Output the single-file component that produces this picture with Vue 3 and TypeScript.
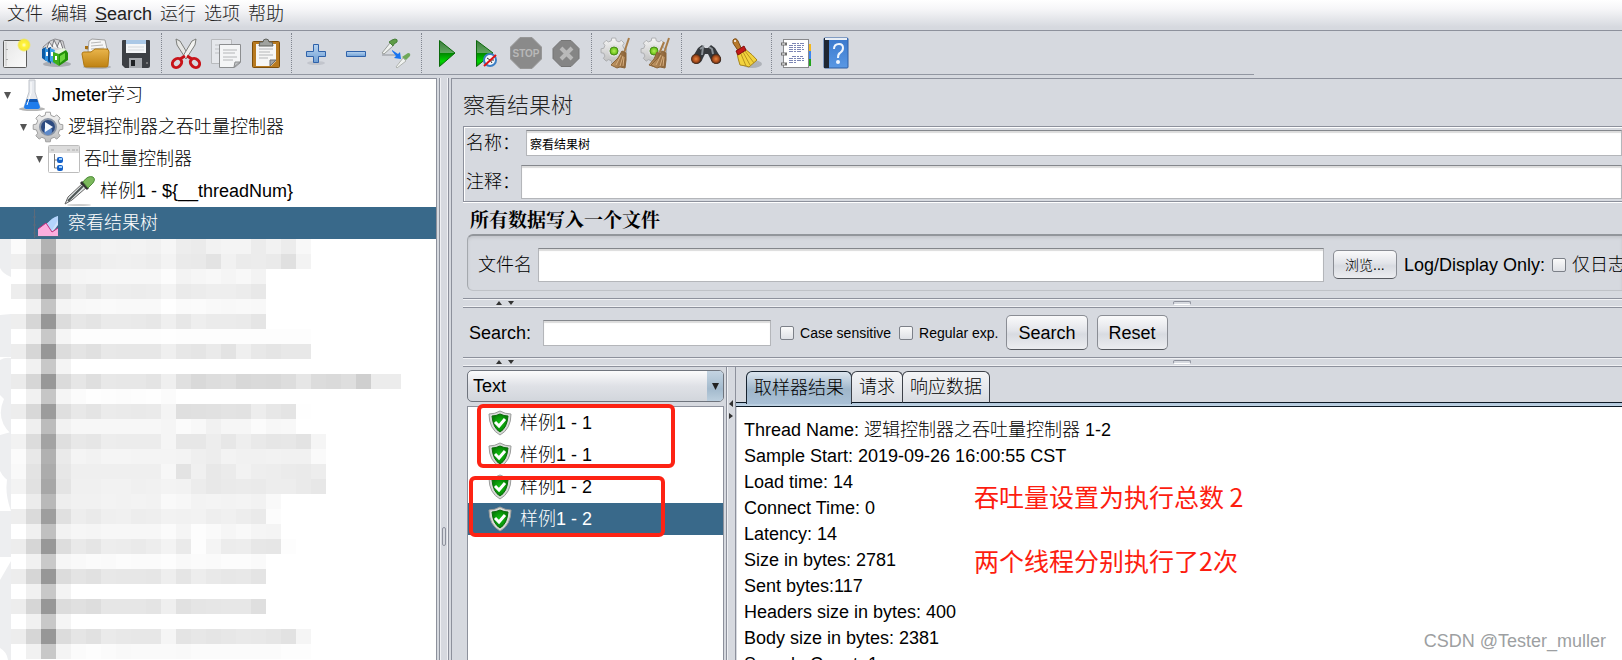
<script setup lang="ts">
import { ref } from 'vue'

const menus = ['文件', '编辑', 'Search', '运行', '选项', '帮助']

const toolGroups: { id: string; label: string }[][] = [
  [
    { id: 'new', label: '新建' },
    { id: 'templates', label: '模板' },
    { id: 'open', label: '打开' },
    { id: 'save', label: '保存' },
  ],
  [
    { id: 'cut', label: '剪切' },
    { id: 'copy', label: '复制' },
    { id: 'paste', label: '粘贴' },
  ],
  [
    { id: 'expand', label: '全部展开' },
    { id: 'collapse', label: '全部折叠' },
    { id: 'toggle', label: '切换' },
  ],
  [
    { id: 'start', label: '启动' },
    { id: 'startnow', label: '不停顿开始' },
    { id: 'stop', label: '停止' },
    { id: 'shutdown', label: '关闭' },
  ],
  [
    { id: 'clear', label: '清除' },
    { id: 'clearall', label: '清除全部' },
  ],
  [
    { id: 'find', label: '查找' },
    { id: 'resetfind', label: '重置搜索' },
  ],
  [
    { id: 'functions', label: '函数助手' },
    { id: 'help', label: '帮助' },
  ],
]

const tree = [
  { text: 'Jmeter学习', icon: 'plan', depth: 0, open: true },
  { text: '逻辑控制器之吞吐量控制器', icon: 'threads', depth: 1, open: true },
  { text: '吞吐量控制器', icon: 'controller', depth: 2, open: true },
  { text: '样例1 - ${__threadNum}', icon: 'sampler', depth: 3, open: false },
  { text: '察看结果树', icon: 'listener', depth: 1, open: false, selected: true },
]

const results = ['样例1 - 1', '样例1 - 1', '样例1 - 2', '样例1 - 2']
const selectedResult = ref(3)

const tabs = ['取样器结果', '请求', '响应数据']
const activeTab = ref(0)

const lines = [
  'Thread Name: 逻辑控制器之吞吐量控制器 1-2',
  'Sample Start: 2019-09-26 16:00:55 CST',
  'Load time: 14',
  'Connect Time: 0',
  'Latency: 14',
  'Size in bytes: 2781',
  'Sent bytes:117',
  'Headers size in bytes: 400',
  'Body size in bytes: 2381',
  'Sample Count: 1',
]

const name = ref('察看结果树')
const comment = ref('')
const filename = ref('')
const query = ref('')
const renderer = ref('Text')

// Outline of an eight-toothed gear centred in a 32px box
const gearPath = (() => {
  const shape: [number, number][] = [[-14, 12], [-9, 15], [9, 15], [14, 12]]
  const points: string[] = []
  for (let tooth = 0; tooth < 8; tooth++) {
    for (const [offset, radius] of shape) {
      const a = ((tooth * 45 + offset) * Math.PI) / 180
      points.push(`${(16 + radius * Math.cos(a)).toFixed(1)} ${(16 + radius * Math.sin(a)).toFixed(1)}`)
    }
  }
  return `M${points.join('L')}z`
})()

// Grey levels of the pixelated block, one string per row of cells
const mosaic = [
  'fb e5 b3 ea f0 f0 f3 f2 f3 f1 f6 ed eb f2 f4 f4 ec f2 ec f8',
  'ef dd a4 e1 ea ea ef f0 ef ed f3 ea e9 e3 f1 eb ec ea e0 f3',
  'ff ec bc f1 f5 f6 f7 f7 f7 f7 fc f3 f6 f8 f5 f8 f3',
  'ed d8 9a dd ec e6 ee ed ec ed f3 ea ec ee ee ec e8',
  'ff f1 c4 f4 f8 f9 fa f9 f9 f9 fe fa fb f9 f8 f9 f8',
  'ee d6 97 dc e7 e4 ea ea e9 e7 ef e7 ee eb eb ea e5',
  'ff f1 c8 f5 fd fd fd fd fd fd fe fd fd fd fd fd fd fd fd fd',
  'ed d6 97 dc e4 e0 e8 e7 e7 e7 ef e7 e5 ea e3 ef e8 e5 e8 e8',
  'ff f1 c8 f4',
  'eb d6 98 db e6 df e8 e7 e7 e4 ef e0 d9 dd df d8 da d9 dd e6 dc da de cf ec ec',
  'ff f1 c6 f5 fb fe fd fc fd fe fb',
  'ed d8 9c df e8 e4 eb ea e9 ea f4 df e0 e1 e3 e2 ed e7 e4 fe',
  'ff ef bc f2 f7 f7 f7 f7 f7 f7 f5 fb f8 f1 f6 f6 fb f7 f8',
  'f2 dc a3 df e8 e6 ed ec ec ec f5 e7 e7 ed e7 ee e9 e6 e7 e3 f5',
  'fb e8 b1 ea f4 f2 f5 f5 f4 f4 f4 f3 ef ed f3 f1 f1 f2 f1 f1 fa',
  'f9 e3 ac e7 ef ef ef ef ef ef f7 e3 f0 e8 eb f2 ee ed eb ea ed',
  'f3 e1 a7 e4 f0 f0 f2 f2 f0 f1 f3 f2 ec e8 ea eb ea ed ed ea e7',
  'ff ec b9 ee f1 f1 f3 f2 f3 f2 f9 f7 f3 f4 f3 f4 f2 f9',
  'ee da 9e e0 ed ea ef f0 ed ee f2 f1 f2 ee f0 ed ea fc',
  'ff f0 c0 f2 f6 f5 f7 f7 f7 f7 fb f5 fd fa f6 f9 f5 f4',
  'ed d6 98 dd e9 e5 ed ec ea ed f3 ea fd f4 ec ed e7 e6 fd',
  'ff f1 c9 f6 f9 fb fa fc fb fb fd f9 fb fa fc fc fa',
  'ed d6 97 dc e4 e1 e8 e7 e7 e6 ee e5 ed e9 e7 e8 e4',
  'ff f1 c8 f4',
  'ed d6 97 dc e0 dd e6 e6 e6 e4 ef e1 e5 e6 e7 e7 df',
  'ff f1 c8 f5',
  'ed d6 97 dc e5 e1 ea e8 e7 e7 f5 e4 e7 e5 e7 e9 e8 e6 e2 f5',
  'ff f1 c8 f4 fb fd fb f9 fa fa fa f9 fb fb fb fb fb fb fd fd',
].map((row) => row.split(' ').map((v) => `#${v}${v}${v}`))
</script>

<template>
  <div class="app">
    <svg class="defs" width="0" height="0" aria-hidden="true">
      <defs>
        <linearGradient id="gPlay" x1="0" y1="0" x2="0" y2="1">
          <stop offset="0" stop-color="#3c7a3c" /><stop offset=".48" stop-color="#5fa85f" />
          <stop offset=".5" stop-color="#008a00" /><stop offset=".8" stop-color="#00d400" /><stop offset="1" stop-color="#009a00" />
        </linearGradient>
        <linearGradient id="gBlue" x1="0" y1="0" x2="0" y2="1">
          <stop offset="0" stop-color="#b9d4f0" /><stop offset="1" stop-color="#6f9fd4" />
        </linearGradient>
        <linearGradient id="gFolder" x1="0" y1="0" x2="0" y2="1">
          <stop offset="0" stop-color="#e9b54c" /><stop offset="1" stop-color="#bf8212" />
        </linearGradient>
        <linearGradient id="gPaper" x1="0" y1="0" x2="1" y2="1">
          <stop offset="0" stop-color="#e6e6e6" /><stop offset="1" stop-color="#fafafa" />
        </linearGradient>
        <linearGradient id="gBook" x1="0" y1="0" x2="0" y2="1">
          <stop offset="0" stop-color="#3a78cc" /><stop offset="1" stop-color="#5a98e4" />
        </linearGradient>
        <linearGradient id="gBroom" x1="0" y1="0" x2="1" y2="0">
          <stop offset="0" stop-color="#c39a68" /><stop offset=".5" stop-color="#a67c4c" /><stop offset="1" stop-color="#8a6238" />
        </linearGradient>
        <linearGradient id="gGear" x1="0" y1="0" x2="0" y2="1">
          <stop offset="0" stop-color="#f6f6f6" /><stop offset="1" stop-color="#bcbcbc" />
        </linearGradient>
        <radialGradient id="gStar">
          <stop offset="0" stop-color="#ffffd0" /><stop offset=".35" stop-color="#fff23a" /><stop offset=".75" stop-color="#f4e83a" /><stop offset="1" stop-color="#f4e83a" stop-opacity="0" />
        </radialGradient>
        <radialGradient id="gOrange">
          <stop offset="0" stop-color="#e8823c" /><stop offset=".6" stop-color="#a84c1c" /><stop offset="1" stop-color="#3a2418" />
        </radialGradient>
        <radialGradient id="gGreen">
          <stop offset="0" stop-color="#b4f05a" /><stop offset="1" stop-color="#5cb80c" />
        </radialGradient>
        <radialGradient id="gShield">
          <stop offset="0" stop-color="#12c412" /><stop offset="1" stop-color="#058005" />
        </radialGradient>
      </defs>
    </svg>

    <nav class="menubar" aria-label="主菜单">
      <button v-for="m in menus" :key="m" type="button">
        <template v-if="m === 'Search'"><u>S</u>earch</template>
        <template v-else>{{ m }}</template>
      </button>
    </nav>

    <div class="toolbar" role="toolbar" aria-label="工具栏">
      <div v-for="(g, gi) in toolGroups" :key="gi" class="group">
        <button v-for="t in g" :key="t.id" type="button" :aria-label="t.label" :disabled="t.id === 'stop' || t.id === 'shutdown'">
          <svg width="32" height="32" viewBox="0 0 32 32" aria-hidden="true">
            <g v-if="t.id === 'new'">
              <rect x="3.500" y="3.500" width="23" height="27" rx="1" fill="url(#gPaper)" stroke="#5c5c5c" />
              <path d="M6 5v24" stroke="#c8c8c8" /><path d="M7 12v1M7 22v1" stroke="#777" />
              <circle cx="24" cy="8" r="7" fill="url(#gStar)" />
            </g>
            <g v-else-if="t.id === 'templates'">
              <ellipse cx="17" cy="27" rx="14" ry="3" fill="#8a8e94" opacity=".6" />
              <path d="M3 10l7-6 5-2 8 2 2 8-5 9H6z" fill="#d4d4d6" stroke="#8c8c90" />
              <path d="M7 11l2-6 4 5M12 10l2-7 4 8M17 10l3-7 3 9" fill="#f6f6f6" stroke="#77777c" />
              <path d="M2 12l4-2v14l-4-3z" fill="#0c5aa4" /><path d="M5 11l4 2v13l-4-3z" fill="#2e92e0" />
              <path d="M8 11l3-1v17l-3-3z" fill="#0a4a8c" /><path d="M10 11l5 2v14l-5-3z" fill="#3fa0ea" />
              <path d="M14 14l10-3 3 3-8 4z" fill="#e8f4e0" /><path d="M13 15l6 2v12l-6-4z" fill="#3cae1a" />
              <path d="M19 17l7-4 2 3v7l-9 6z" fill="#23900a" /><path d="M20 19l5-3v6l-5 4z" fill="#6ad63c" />
              <path d="M7 15v4M12 15v4M16 19v4" stroke="#fff" stroke-width="2" />
            </g>
            <g v-else-if="t.id === 'open'">
              <ellipse cx="17" cy="30" rx="14" ry="2" fill="#8a8e94" opacity=".5" />
              <path d="M5 12V9h5l2 2h16v5z" fill="#a86f10" />
              <path d="M8 15l1-11 3-2 13 1 3 13z" fill="#f6f6f6" stroke="#a0a0a0" /><path d="M11 6l10-1M11 9l12-1M11 12l13-1" stroke="#b8b8b8" />
              <path d="M2 17q0-2 2-2h7l4-3h11q3 0 3 3l-1 13q0 2-2 2H6q-2 0-2-2z" fill="url(#gFolder)" stroke="#b07810" />
            </g>
            <g v-else-if="t.id === 'save'">
              <path d="M2 4q0-1 1-1h26q1 0 1 1v25q0 2-2 2H5l-3-3z" fill="#3c3f44" />
              <rect x="6" y="3" width="20" height="13" fill="#f4f6f8" /><rect x="6" y="3" width="20" height="4" fill="#aac8e6" />
              <path d="M8 10h16M8 13h16" stroke="#d4d8dc" />
              <rect x="9" y="21" width="13" height="10" fill="#a8abb0" /><rect x="11" y="23" width="4" height="6" fill="#1f2124" />
              <circle cx="27" cy="26" r="1" fill="#888" />
            </g>
            <g v-else-if="t.id === 'cut'">
              <path d="M6 2l4 2 9 15-3 3L7 8z" fill="#e6e6e4" stroke="#7c7e7a" /><path d="M26 2l-4 2-9 15 3 3 9-14z" fill="#f2f2f0" stroke="#7c7e7a" />
              <g fill="none" stroke="#c8141a" stroke-width="3"><ellipse cx="7" cy="26" rx="4" ry="5" transform="rotate(50 7 26)" /><ellipse cx="25" cy="26" rx="4" ry="5" transform="rotate(-50 25 26)" /><path d="M10 22l5-3M22 22l-5-3" /></g>
            </g>
            <g v-else-if="t.id === 'copy'" stroke="#a2a4a6">
              <path d="M1.500 2.500h20v24h-20z" fill="#e6e8ec" stroke="#b8babd" /><path d="M5 8h13M5 12h13M5 16h10" stroke="#c0c2c5" />
              <path d="M9.500 7.500h21v18l-6 5h-15z" fill="#f4f5f6" stroke="#8c8e90" /><path d="M13 13h14M13 16h12M13 20h14M13 23h10" stroke="#b4b6b8" />
              <path d="M30 25l-6 5 1-5z" fill="#c4c6c8" stroke="#8c8e90" />
            </g>
            <g v-else-if="t.id === 'paste'">
              <rect x="2.500" y="4.500" width="27" height="26" rx="1" fill="#b87a20" stroke="#7c4e0c" />
              <path d="M6 7h20v17l-5 5H6z" fill="#f6f6f6" /><path d="M9 12h14M9 15h11M9 18h14M9 21h9" stroke="#b4b6b8" />
              <path d="M26 23l-6 6v-6z" fill="#a4a6a8" stroke="#6c6e70" />
              <path d="M10 5h3q0-3 3-3t3 3h3l1 4H9z" fill="#a0a29e" stroke="#60625e" />
            </g>
            <g v-else-if="t.id === 'expand'">
              <ellipse cx="16" cy="26" rx="9" ry="2" fill="#b4b8c0" opacity=".6" />
              <path d="M13.500 7.500h5v7h7v5h-7v6h-5v-6h-7v-5h7z" fill="url(#gBlue)" stroke="#2f62aa" />
            </g>
            <path v-else-if="t.id === 'collapse'" d="M6.500 14.500h19v5h-19z" fill="url(#gBlue)" stroke="#2f62aa" />
            <g v-else-if="t.id === 'toggle'">
              <path d="M2 16L10 6l3 3-9 8z" fill="#f0f2f0" stroke="#9a9e9a" /><path d="M9 5l4 4 1-2 3-2q1-3-2-3l-3 1z" fill="#5f9c46" stroke="#48803a" />
              <path d="M2 18h14" stroke="#8f9399" />
              <path d="M16 30l7-9 3 3-9 7z" fill="#f0f2f0" stroke="#b0b4b0" /><path d="M22 20l4 3 4-4q1-3-2-3z" fill="#6fa858" />
              <path d="M12 13l6 4 2-2 1 7-7-1 2-2-4-5z" fill="#1874f0" />
            </g>
            <path v-else-if="t.id === 'start'" d="M9.500 3.500L25 16 9.500 29.500z" fill="url(#gPlay)" stroke="#0a6a0a" />
            <g v-else-if="t.id === 'startnow'">
              <path d="M6.500 3.500L23 16 6.500 29.500z" fill="url(#gPlay)" stroke="#0a6a0a" />
              <circle cx="20" cy="23" r="6" fill="#f4f8fc" stroke="#3c7ec4" stroke-width="2" /><path d="M17 21l3 2h4M20 23l2 3" stroke="#333" fill="none" /><path d="M14 29L26 18" stroke="#dc1414" stroke-width="2" />
            </g>
            <g v-else-if="t.id === 'stop'">
              <path d="M10 .5h12L31.500 10v12L22 31.500H10L.5 22V10z" fill="#8a8a8a" stroke="#979797" />
              <text x="16" y="20" text-anchor="middle" class="stoptext">STOP</text>
            </g>
            <g v-else-if="t.id === 'shutdown'">
              <path d="M11 3.500h10l8 8v10l-8 8H11l-8-8v-10z" fill="#858585" stroke="#757575" /><path d="M11 11l11 11M22 11L11 22" stroke="#b9b9b9" stroke-width="4" />
            </g>
            <g v-else-if="t.id === 'clear' || t.id === 'clearall'">
              <path :d="gearPath" fill="url(#gGear)" stroke="#a6a8aa" transform="scale(.86)" />
              <circle cx="14" cy="14" r="6" fill="#dcdedc" />
              <circle cx="14" cy="14" r="4" fill="url(#gGreen)" stroke="#4a8c1a" />
              <g v-if="t.id === 'clearall'"><path d="M24 5l-5 12" stroke="#a87c48" stroke-width="2" /><path d="M17 15l3 2-1 12-4 1-6-2 5-6z" fill="url(#gBroom)" stroke="#8a6438" /></g>
              <path d="M29 1l-5 15" stroke="#a87c48" stroke-width="2" />
              <path d="M22 14l4 2v7l-1 8-5-1-3 1-6-3 7-7z" fill="url(#gBroom)" stroke="#8a6438" /><path d="M21 18l-5 10M23 19l-3 10M24 20l-1 9" stroke="#d8b080" />
            </g>
            <g v-else-if="t.id === 'find'">
              <path d="M8 11l4-3 3 3h3l3-3 4 3 6 10q1 5-4 6-5 0-7-6l-2-4h-3l-2 4q-2 6-7 6-5-1-4-6z" fill="#35383c" />
              <path d="M10 12l3-2-1 8M19 10l3 2 1 5" fill="none" stroke="#8a9096" stroke-width="2" />
              <circle cx="6" cy="22" r="5" fill="url(#gOrange)" /><circle cx="26" cy="22" r="5" fill="url(#gOrange)" />
            </g>
            <g v-else-if="t.id === 'resetfind'">
              <ellipse cx="22" cy="27" rx="10" ry="4" fill="#a4a7ae" opacity=".8" />
              <path d="M3 3q3-3 5 1l4 9-3 2-6-9z" fill="#b87a2c" stroke="#7c4c14" /><circle cx="5" cy="4" r="1" fill="#fff" />
              <path d="M15 12q8 6 12 11l-8 7-3-1-6-1q-2-6-3-12z" fill="#f2d23c" stroke="#a8861c" /><path d="M11 17l5 12M13 15l7 13M15 14l9 12" stroke="#b8941c" />
              <path d="M6 14l8-5 2 4-8 5z" fill="#c41818" stroke="#801010" />
            </g>
            <g v-else-if="t.id === 'functions'">
              <path d="M26 7h5v7h-5z" fill="#f4b81c" /><path d="M26 14h5v8h-5z" fill="#3c86f0" /><path d="M26 22h5v7h-5z" fill="#22a41c" />
              <rect x="3.500" y="2.500" width="25" height="28" fill="#fff" stroke="#88898c" />
              <path d="M12 6.500h13M9 8.500h16M9 10.500h14M9 12.500h16M9 14.500h12M12 19.500h11M9 21.500h16M9 23.500h15M9 25.500h8" stroke="#7c86b4" stroke-dasharray="4 1 2 1" />
              <path d="M1 7h6M1 17h6M1 27h6" stroke="#707070" stroke-width="3" /><path d="M2 7h3M2 17h3M2 27h3" stroke="#fff" />
            </g>
            <g v-else-if="t.id === 'help'">
              <rect x="4" y="1" width="24" height="30" rx="1" fill="url(#gBook)" stroke="#2e5ea4" /><path d="M4 1h5v30H4z" fill="#1f2733" /><path d="M5 2h22" stroke="#e8eef6" stroke-width="2" />
              <path d="M14 12q0-5 5-5 4 0 4 4 0 3-3 5-2 1-2 5" fill="none" stroke="#f0f6fe" stroke-width="2" /><circle cx="18" cy="25" r="2" fill="#f0f6fe" />
            </g>
          </svg>
        </button>
      </div>
    </div>

    <div class="main">
      <aside class="treepane">
        <ul class="tree" role="tree">
          <li v-for="n in tree" :key="n.text" role="treeitem" :class="['node', `d${n.depth}`, { selected: n.selected }]">
            <svg width="16" height="16" viewBox="0 0 16 16" aria-hidden="true"><path v-if="n.open" d="M4 5h7l-3.500 7z" fill="#555" /></svg>
            <svg width="32" height="32" viewBox="0 0 32 32" aria-hidden="true">
              <g v-if="n.icon === 'plan'">
                <ellipse cx="16" cy="30" rx="13" ry="2" fill="#b4b4b4" />
                <path d="M13 1h6v12l5 15q0 2-2 2H10q-2 0-2-2l5-15z" fill="#e6e9ee" stroke="#c0c4ca" /><path d="M11 20h10l3 8q0 2-2 2H10q-2 0-2-2z" fill="#1f7cec" /><path d="M11 20h10l1 3H10z" fill="#1258b4" /><path d="M15 3v11l-4 12" stroke="#fff" fill="none" />
              </g>
              <g v-else-if="n.icon === 'threads'">
                <path :d="gearPath" fill="url(#gGear)" stroke="#a0a0a0" /><circle cx="16" cy="16" r="8" fill="#2c4a80" stroke="#8a94a4" stroke-width="2" /><circle cx="16" cy="20" r="4" fill="#5c88c8" /><path d="M13 11v10l8-5z" fill="#f4f8fc" />
              </g>
              <g v-else-if="n.icon === 'controller'">
                <rect x=".5" y="2.500" width="31" height="27" rx="1" fill="#fff" stroke="#bcbcbc" /><path d="M1 3h30v7H1z" fill="#dcdcdc" /><path d="M3 7h3M19 7h3M24 7h3M28 7h2" stroke="#aaa" />
                <path d="M6.500 11v14h5M6.500 17h5" fill="none" stroke="#777" /><rect x="9" y="14" width="6" height="6" rx="2" fill="#1460c8" /><rect x="9" y="22" width="6" height="6" rx="2" fill="#1460c8" /><path d="M11 16h3M11 24h3" stroke="#9cd0ff" stroke-width="2" />
              </g>
              <g v-else-if="n.icon === 'sampler'">
                <ellipse cx="15" cy="30" rx="12" ry="1" fill="#ccc" />
                <path d="M1 29l3-7L19 8l4 4L8 25z" fill="#e0e4e4" stroke="#666" /><path d="M4 26L19 11" stroke="#4c5454" stroke-width="2" /><path d="M17 7l7 7" stroke="#333" stroke-width="3" /><path d="M19 7q5-7 10-5 4 3-3 9l-2 2z" fill="#7cb85c" stroke="#4c8c38" />
              </g>
              <g v-else>
                <path d="M2.500 2v29M2 29h26M1 10h3M1 18h3M1 26h3" stroke="#5d6b7a" fill="none" />
                <path d="M14 17l12-8v9l-6 8z" fill="#cfe2fc" /><path d="M14 18q6-8 12-9v4l-7 12z" fill="#b4d4fc" /><path d="M6 22l8-6 6 9 6-4v8H6z" fill="#fcaede" /><path d="M6 22l8-6 6 9 6-4" fill="none" stroke="#c42c7c" />
              </g>
            </svg>
            <span>{{ n.text }}</span>
          </li>
        </ul>
        <svg width="410" height="421" viewBox="0 0 410 421" aria-hidden="true">
          <path d="M0 0h11v38Q3 35 0 29zM0 76l11-1v43H0zM0 121q5-3 11-2v76Q-5 180 4 160L0 156zM0 196l11-3v50Q4 240 0 232zM11 272q-8-22-2-39h2zM0 272h11v46H0zM11 322v99H8q-1-8-8-12v-68z" fill="#edeef0" />
          <g v-for="(row, r) in mosaic" :key="r" shape-rendering="crispEdges">
            <rect v-for="(c, i) in row" :key="i" :x="11 + i * 15" :y="r * 15" width="15" height="15" :fill="c" />
          </g>
        </svg>
      </aside>

      <div class="vsplit"><i class="vgrip"></i></div>

      <main class="panel">
        <h1>察看结果树</h1>
        <div class="namebox">
          <div class="field"><label for="name">名称：</label><input id="name" v-model="name" type="text" class="short" /></div>
          <div class="field"><label for="comment">注释：</label><input id="comment" v-model="comment" type="text" /></div>
        </div>
        <h2>所有数据写入一个文件</h2>
        <div class="filebox">
          <label for="filename">文件名</label>
          <input id="filename" v-model="filename" type="text" />
          <button type="button" class="btn browse">浏览...</button>
          <span class="only">Log/Display Only:</span>
          <label class="check"><input type="checkbox" />仅日志错误</label>
        </div>

        <div class="hsplit"><svg width="20" height="8" viewBox="0 0 20 8" aria-hidden="true"><path d="M1 6h6L4 2zM13 2h6l-3 4z" fill="#333" /></svg><i class="hgrip"></i></div>

        <form class="search" @submit.prevent>
          <label for="query">Search:</label>
          <input id="query" v-model="query" type="text" />
          <label class="check small"><input type="checkbox" />Case sensitive</label>
          <label class="check small"><input type="checkbox" />Regular exp.</label>
          <button type="submit" class="btn">Search</button>
          <button type="reset" class="btn">Reset</button>
        </form>

        <div class="hsplit"><svg width="20" height="8" viewBox="0 0 20 8" aria-hidden="true"><path d="M1 6h6L4 2zM13 2h6l-3 4z" fill="#333" /></svg><i class="hgrip"></i></div>

        <div class="results">
          <section class="listcol">
            <div class="combo">
              <select v-model="renderer" aria-label="渲染器"><option>Text</option></select>
              <svg class="drop" width="16" height="30" viewBox="0 0 16 30" aria-hidden="true"><path d="M5 12h7l-3.500 7z" fill="#222" /></svg>
            </div>
            <ul class="list" role="listbox" aria-label="结果">
              <li v-for="(r, i) in results" :key="i" role="option" :aria-selected="selectedResult === i" :class="{ selected: selectedResult === i }" @click="selectedResult = i">
                <svg width="24" height="26" viewBox="0 0 24 26" aria-hidden="true">
                  <path d="M12 1q5 3 11 3 0 15-11 21Q1 19 1 4q6 0 11-3z" fill="#d8dad8" stroke="#9a9c9a" />
                  <path d="M12 4q4 2 8 2-1 12-8 16Q5 18 4 6q4 0 8-2z" fill="url(#gShield)" stroke="#0a6a0a" /><path d="M7 12l4 4 6-7" fill="none" stroke="#fff" stroke-width="3" />
                </svg>
                {{ r }}
              </li>
            </ul>
            <i class="mark first"></i>
            <i class="mark second"></i>
          </section>
          <div class="rsplit"><svg width="8" height="24" viewBox="0 0 8 24" aria-hidden="true"><path d="M6 2v7L2 6zM2 15v6l4-3z" fill="#333" /></svg></div>
          <section class="detail">
            <div class="tabs" role="tablist">
              <button v-for="(t, i) in tabs" :key="t" type="button" role="tab" :aria-selected="activeTab === i" :class="{ active: activeTab === i }" @click="activeTab = i">{{ t }}</button>
            </div>
            <div class="output" role="tabpanel">
              <p v-for="l in lines" :key="l">{{ l }}</p>
              <div class="notes"><p>吞吐量设置为执行总数 2</p><p>两个线程分别执行了2次</p></div>
            </div>
          </section>
        </div>
      </main>
    </div>
    <div class="watermark">CSDN @Tester_muller</div>
  </div>
</template>

<style>
html, body { margin: 0; height: 100%; overflow: hidden; }
</style>

<style scoped>
.app {
  position: relative;
  display: flex;
  flex-direction: column;
  height: 100vh;
  overflow: hidden;
  background: #d6d9df;
  color: #000;
  font: 300 18px/24px "Liberation Sans", "Noto Sans CJK SC", sans-serif;
}
.app * { box-sizing: border-box; }
.defs { position: absolute; }
button, input, select { font: inherit; color: inherit; margin: 0; }
h1, h2, p, ul { margin: 0; padding: 0; font-weight: 300; list-style: none; }
svg { display: block; flex: none; }

.menubar {
  display: flex;
  flex: none;
  gap: 8px;
  height: 31px;
  padding: 0 7px 3px;
  background: linear-gradient(#fff, #f6f6f8 30%, #d6d9df 90%);
  border-bottom: 1px solid #8d919c;
}
.menubar button { padding: 0; border: 0; background: none; color: #222; white-space: nowrap; }

.toolbar { display: flex; flex: none; align-self: flex-start; height: 44px; width: 1254px; max-width: 100%; border-bottom: 1px solid #9297a1; }
.group { display: flex; align-items: center; padding: 0 5px 0 4px; margin: 2px 0 1px; border-right: 1px dotted #80858f; }
.group:first-child { margin-left: -8px; }
.group:last-child { border-right: 0; }
.group button { display: flex; justify-content: center; width: 40px; padding: 0 0 1px; border: 0; background: none; }
.stoptext { font: bold 10px "Liberation Sans", sans-serif; fill: #b8b8b8; }

.main { display: flex; flex: 1; min-height: 0; margin-top: 3px; }
.treepane { flex: none; width: 27%; max-width: 437px; overflow: hidden; background: #fff; border: solid #8d919c; border-width: 1px 1px 0 0; }
.node { display: flex; align-items: center; height: 32px; white-space: nowrap; }
.node span { margin-left: 4px; }
.d1 { padding-left: 16px; }
.d2 { padding-left: 32px; }
.d3 { padding-left: 48px; }
.selected { background: #39698a; color: #fff; }

.vsplit { display: flex; flex: none; align-items: flex-end; justify-content: center; width: 10px; margin: 0 2px; padding-bottom: 114px; border: solid #8d919c; border-width: 0 1px; box-shadow: inset 1px 0 #f0f1f4, inset -1px 0 #f0f1f4; }
.vgrip { width: 4px; height: 19px; border: 1px solid #8d919c; border-radius: 2px; }

.panel { display: flex; flex: 1; flex-direction: column; min-width: 0; padding-left: 11px; overflow: hidden; border: solid #8d919c; border-width: 1px 0 0 1px; }
h1 { flex: none; height: 47px; padding-top: 5px; font-size: 22px; line-height: 44px; color: #222; }
input[type="text"] { min-width: 0; padding: 0 3px; background: #fff; border: 1px solid #b4b6ba; border-top-color: #84878c; border-radius: 0; box-shadow: inset 0 2px 1px #dcdcdc; outline: 0; }
.namebox { display: flex; flex: none; flex-direction: column; gap: 9px; padding: 3px 0 2px 2px; border: solid #8d919c; border-width: 1px 0 1px 1px; box-shadow: inset 1px 1px #fff, 0 1px #fff; }
.field { display: flex; align-items: center; }
.field label { flex: none; width: 55px; white-space: nowrap; }
.field input { flex: 1; height: 34px; }
.field input.short { height: 26px; margin-left: 5px; font-size: 12px; font-weight: 400; }
h2 { flex: none; height: 32px; padding: 3px 0 0 7px; font-size: 19px; font-weight: 700; line-height: 32px; font-family: "Liberation Serif", "Noto Serif CJK SC", "Noto Sans CJK SC", serif; }
.filebox { display: flex; flex: none; align-items: center; height: 57px; margin: 0 0 7px 4px; padding: 3px 0 0 10px; white-space: nowrap; border: 1px solid #bfc2c7; border-top: 2px solid #92969b; border-left-color: #a4a8ad; border-right: 0; border-radius: 6px 0 0 6px; box-shadow: inset 0 2px 3px #c4c7cc; }
.filebox > input { flex: 1; height: 34px; margin: 0 9px 0 6px; }
.filebox .check { flex: none; width: 70px; overflow: hidden; }
.btn { flex: none; height: 35px; padding: 0 11px; border: 1px solid #8a8d94; border-bottom-color: #55585e; border-radius: 5px; background: linear-gradient(#fafafb, #e2e4e9 45%, #d8dbe1 55%, #ecedf0); }
.browse { width: 64px; height: 29px; padding: 0; font-size: 14px; }
.only { margin: 0 7px; }
.check { display: flex; align-items: center; gap: 6px; white-space: nowrap; }
.check input { flex: none; appearance: none; width: 14px; height: 14px; border: 1px solid #7c8088; border-radius: 2px; background: linear-gradient(#fafafa, #dfe1e6); }
.check input:checked { background: #39698a; }
.small { font-size: 14px; }

.hsplit { display: flex; flex: none; align-items: center; height: 10px; border: solid #8d919c; border-width: 1px 0; box-shadow: inset 0 1px #f0f1f4, inset 0 -1px #f0f1f4; }
.hsplit svg { margin-left: 32px; }
.hgrip { width: 18px; height: 4px; margin-left: 658px; border: 1px solid #8d919c; border-bottom-color: #fff; border-radius: 2px; }
.search { display: flex; flex: none; align-items: center; height: 49px; padding-left: 6px; }
.search > input { width: 228px; height: 26px; margin: 0 9px 0 12px; }
.search .check { margin-right: 8px; }
.search .btn { margin-right: 9px; }

.results { display: flex; flex: 1; min-height: 0; }
.listcol { position: relative; display: flex; flex: none; flex-direction: column; width: 263px; padding: 3px 2px 0 4px; }
.combo { position: relative; flex: none; height: 32px; margin-bottom: 4px; }
.combo select { width: 100%; height: 32px; padding: 0 5px; appearance: none; border: 1px solid #6f747d; border-radius: 5px; background: linear-gradient(#fbfbfc, #dfe1e6 50%, #d2d6dc); }
.drop { position: absolute; top: 1px; right: 1px; pointer-events: none; background: linear-gradient(#c4d4e2, #a3bacd 60%, #bccfde); border-radius: 0 4px 4px 0; }
.list { flex: 1; background: #fff; border: 1px solid #8d919c; border-bottom: 0; }
.list li { display: flex; align-items: center; gap: 8px; height: 32px; padding-left: 20px; }
.mark { position: absolute; width: 198px; height: 64px; border: 4px solid #fd2314; border-radius: 6px; }
.first { left: 14px; top: 37px; }
.second { left: 6px; top: 109px; width: 196px; height: 61px; }
.rsplit { flex: none; width: 10px; padding-top: 31px; border: solid #8d919c; border-width: 0 1px; box-shadow: inset 1px 0 #f0f1f4; }
.detail { display: flex; flex: 1; flex-direction: column; min-width: 0; }
.tabs { display: flex; flex: none; height: 40px; padding: 4px 0 0 10px; border-bottom: 1px solid #0d1a26; background: linear-gradient(#0d1a26, #0d1a26) 0 35px / 100% 1px no-repeat, linear-gradient(#a9c0d6, #c2d6e6) 0 100% / 100% 4px no-repeat; }
.tabs button { height: 32px; padding: 0 7px; margin-right: -1px; border: 1px solid #3c4048; border-bottom-color: #0d1a26; border-radius: 6px 6px 0 0; background: linear-gradient(#f4f5f7, #d8dbe1); }
.tabs button.active { height: 33px; border-color: #16222e; border-bottom: 0; background: linear-gradient(#dbe5ee, #9fb6ca 55%, #a9c0d6); }
.output { position: relative; flex: 1; min-height: 0; overflow: hidden; padding: 10px 7px 0; background: #fff; border-left: 1px solid #d6d9df; white-space: nowrap; line-height: 26px; }
.notes { position: absolute; left: 237px; top: 57px; color: #fd1d10; font: 25px/64px "Noto Sans CJK SC", sans-serif; }
.notes p { font-weight: 400; }
.watermark { position: absolute; right: 16px; bottom: 7px; color: #9d9fa2; }
</style>
